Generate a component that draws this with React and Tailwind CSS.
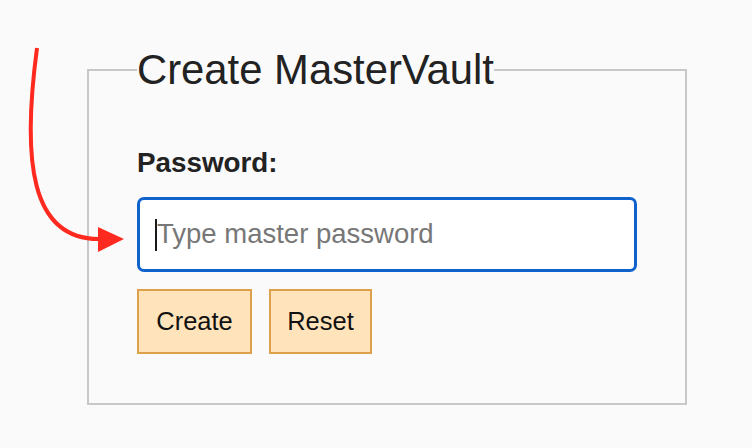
import React from "react";

export default function App() {
  return (
    <div className="relative w-[752px] h-[448px] bg-[#fafafa] font-['Liberation_Sans',Arial,sans-serif] overflow-hidden">
      <div className="pt-[46px] pl-[87px]">
        <fieldset className="w-[600px] border-2 border-[#c8c8c8] pl-[48px] pt-[53px] pb-[49px]">
          <legend className="text-[41.8px] leading-[47.5px] text-[#222]">Create MasterVault</legend>
          <label className="block text-[27.8px] leading-[32px] font-bold text-[#222]">Password:</label>
          <div className="relative mt-[18px] w-[500px] h-[75px]">
            <input
              type="password"
              placeholder="Type master password"
              className="w-full h-full rounded-[7px] border-[3px] border-[#0f62cc] bg-white pl-[17px] text-[27.5px] text-[#222] placeholder:text-[#777] outline-none caret-transparent"
            />
            <span className="absolute left-[18px] top-[22px] w-[2px] h-[32px] bg-[#1a1a1a]" />
          </div>
          <div className="mt-[17px] flex gap-[17px]">
            <button className="w-[115px] h-[65px] bg-[#ffe4bb] border-2 border-[#dca14a] text-[25.5px] text-[#111]">Create</button>
            <button className="w-[103px] h-[65px] bg-[#ffe4bb] border-2 border-[#dca14a] text-[25.5px] text-[#111]">Reset</button>
          </div>
        </fieldset>
      </div>
      <svg className="absolute left-0 top-0 pointer-events-none" width="752" height="448" viewBox="0 0 752 448">
        <path d="M37 48 C 22 160, 30 240, 100 239" fill="none" stroke="#ff2a1f" strokeWidth="4" />
        <polygon points="98,227 124,239 98,252" fill="#ff2a1f" />
      </svg>
    </div>
  );
}
